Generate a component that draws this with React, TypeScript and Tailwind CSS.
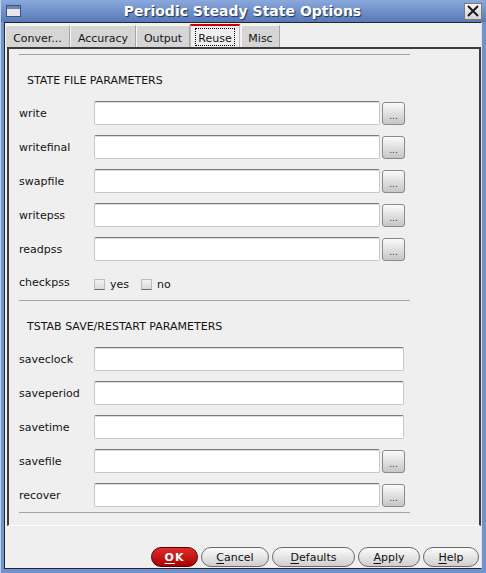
import React from "react";

type FieldProps = { label: string; browse?: boolean };

const BrowseButton: React.FC = () => (
  <div className="ml-[2px] flex h-[23px] w-[23px] items-end justify-center rounded-[3px] border border-[#8a8a8a] bg-gradient-to-b from-[#fbfbfb] to-[#c6c6c6] pb-[3px] text-[9px] leading-[9px] text-[#333]">
    ...
  </div>
);

const Field: React.FC<FieldProps> = ({ label, browse }) => (
  <div className="flex h-[34px] items-center">
    <span className="w-[75px] pt-[3px]">{label}</span>
    <div
      className={
        browse
          ? "h-[24px] w-[286px] rounded-[2px] border border-[#c8c8c8] border-t-[#7c7c7c] bg-white shadow-[inset_0_1px_0_#dcdcdc]"
          : "h-[24px] w-[310px] rounded-[2px] border border-[#c8c8c8] border-t-[#7c7c7c] bg-white shadow-[inset_0_1px_0_#dcdcdc]"
      }
    />
    {browse && <BrowseButton />}
  </div>
);

const Section: React.FC<{ title: string }> = ({ title }) => (
  <div className="h-[41px] pl-[8px] pt-[19px] leading-[13px]">{title}</div>
);

const Separator: React.FC = () => <div className="h-[1px] w-[391px] bg-[#a4a4a4]" />;

const Check: React.FC<{ label: string }> = ({ label }) => (
  <div className="flex items-center">
    <div className="h-[11px] w-[11px] border border-[#bdbdbd] border-b-[#6a6a6a] bg-gradient-to-b from-[#f2f2f2] to-[#dadada]" />
    <span className="ml-[5px] mt-[2px]">{label}</span>
  </div>
);

const Tab: React.FC<{ label: string; width: string; active?: boolean }> = ({ label, width, active }) =>
  active ? (
    <div className={`${width} flex h-[23px] items-end justify-center border-t-2 border-t-[#cc0000] border-x border-x-[#bdbdbd] bg-[#efefef] pb-[1px]`}>
      <span className="border border-dotted border-black px-[2px] pt-[3px] leading-[13px]">{label}</span>
    </div>
  ) : (
    <div className={`${width} flex h-[22px] items-end justify-center border-l border-t border-l-[#f6f6f6] border-t-[#f6f6f6] border-r border-r-[#a6a6a6] bg-[#d5d5d5] pb-[2px] leading-[13px]`}>
      {label}
    </div>
  );

const DialogButton: React.FC<{ label: string; width: string }> = ({ label, width }) => (
  <button
    className={`${width} h-[20px] rounded-full border border-[#6a6a6a] bg-gradient-to-b from-[#fcfcfc] to-[#cfcfcf] pt-[1px] text-[11px] leading-[13px] text-[#111]`}
  >
    <span className="underline underline-offset-2">{label[0]}</span>
    {label.slice(1)}
  </button>
);

export default function App() {
  return (
    <div className="flex h-[573px] w-[486px] flex-col border-l border-l-[#c3d0e6] bg-[#6f93cf] font-['DejaVu_Sans',sans-serif] text-[11px] text-[#141414]">
      {/* title bar */}
      <div className="flex h-[22px] items-center bg-gradient-to-b from-[#8aa9dc] to-[#5679b8] pl-[5px] pr-[4px]">
        <div className="flex h-[12px] w-[15px] flex-col border border-[#3f5278] bg-[#e6e6e6]">
          <div className="h-[3px] bg-[#6c85b3]" />
        </div>
        <div className="flex-1 text-center text-[14px] font-bold leading-[18px] text-white [text-shadow:1px_1px_1px_#1d3160]">
          Periodic Steady State Options
        </div>
        <div className="flex h-[17px] w-[18px] items-center justify-center border border-[#7c7c7c] bg-gradient-to-b from-[#f4f4f4] to-[#d4d4d4]">
          <svg width="12" height="12" viewBox="0 0 12 12">
            <path d="M1 1 L11 11 M11 1 L1 11" stroke="#1a1a1a" strokeWidth="2" />
          </svg>
        </div>
      </div>

      <div className="flex flex-1 flex-col pb-[4px] pl-[3px] pr-[4px]">
        <div className="flex flex-1 flex-col border border-[#262626] border-r-[#e4e4e4] bg-[#efefef]">
          {/* tabs */}
          <div className="flex h-[24px] items-end">
            <Tab label="Conver..." width="w-[65px]" />
            <Tab label="Accuracy" width="w-[66px]" />
            <Tab label="Output" width="w-[54px]" />
            <Tab label="Reuse" width="w-[50px]" active />
            <div className="w-[1px]" />
            <Tab label="Misc" width="w-[39px]" />
          </div>

          {/* panel */}
          <div className="ml-[2px] flex flex-1 flex-col border-b border-l-2 border-r-2 border-t-2 border-b-white border-l-[#3c3c3c] border-r-[#3c3c3c] border-t-[#3c3c3c] pl-[10px] pt-[5px]">
            <Separator />
            <Section title="STATE FILE PARAMETERS" />
            <Field label="write" browse />
            <Field label="writefinal" browse />
            <Field label="swapfile" browse />
            <Field label="writepss" browse />
            <Field label="readpss" browse />
            <div className="flex h-[34px] items-center">
              <span className="w-[75px]">checkpss</span>
              <div className="flex gap-[12px] pt-[2px]">
                <Check label="yes" />
                <Check label="no" />
              </div>
            </div>
            <Separator />
            <Section title="TSTAB SAVE/RESTART PARAMETERS" />
            <Field label="saveclock" />
            <Field label="saveperiod" />
            <Field label="savetime" />
            <Field label="savefile" browse />
            <Field label="recover" browse />
            <Separator />
          </div>

          {/* buttons */}
          <div className="flex h-[42px] items-end justify-end gap-[3px] pb-[1px] pr-[2px]">
            <button className="h-[20px] w-[47px] rounded-full border border-[#5a0000] bg-gradient-to-b from-[#e22a2a] to-[#a80000] pt-[1px] text-[11px] font-bold leading-[13px] tracking-[1px] text-white">
              <span className="underline underline-offset-2">O</span>K
            </button>
            <DialogButton label="Cancel" width="w-[68px]" />
            <DialogButton label="Defaults" width="w-[83px]" />
            <DialogButton label="Apply" width="w-[62px]" />
            <DialogButton label="Help" width="w-[56px]" />
          </div>
        </div>
      </div>
    </div>
  );
}
